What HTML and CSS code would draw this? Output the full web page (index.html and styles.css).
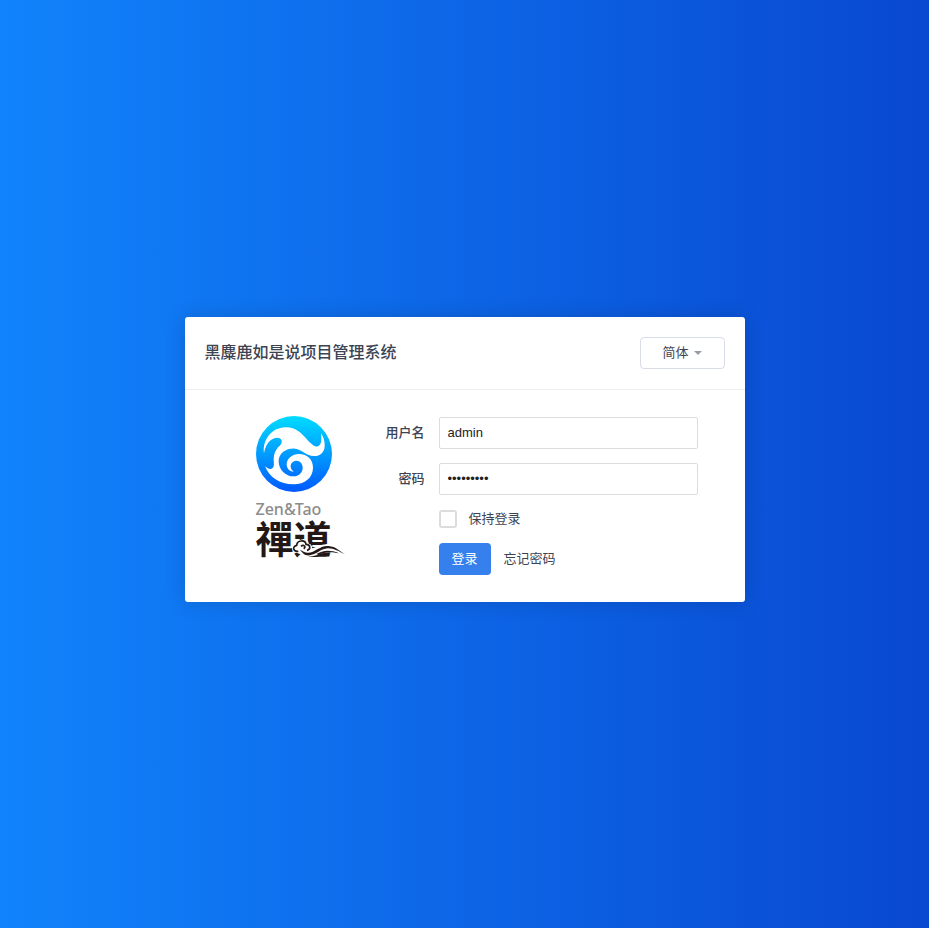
FILE: index.html
```html
<!DOCTYPE html>
<html lang="zh-CN">
<head>
<meta charset="utf-8">
<meta name="viewport" content="width=device-width, initial-scale=1">
<title>用户登录</title>
<link rel="stylesheet" href="styles.css">
</head>
<body>
<main class="login-panel">
  <header class="panel-head">
    <h1 class="title">黑麋鹿如是说项目管理系统</h1>
    <button type="button" class="lang-btn">简体<span class="caret"></span></button>
  </header>
  <div class="panel-body">
    <div class="brand">
      <svg class="brand-mark" viewBox="33 33 228 228" aria-hidden="true">
        <defs>
          <linearGradient id="sea" x1="0" y1="0" x2="0" y2="1">
            <stop offset="0" stop-color="#00dcff"/>
            <stop offset="0.5" stop-color="#009cff"/>
            <stop offset="1" stop-color="#0058ff"/>
          </linearGradient>
        </defs>
        <circle cx="147" cy="147" r="114" fill="url(#sea)"/>
        <path fill="#fff" d="M57 145C52 106 78 68 122 67C151 66 169 84 187 104C200 118 211 128 221 123C230 118 230 101 228 85C236 97 240 110 239 125C237 144 223 154 206 153C184 152 172 134 150 131C125 129 102 144 101 167C100 195 124 215 147 214C163 213 173 201 173 188C173 176 165 167 155 167C144 167 137 175 137 184C137 192 141 196 146 200C133 200 125 190 125 178C125 160 142 147 162 147C187 147 204 163 204 188C204 218 179 238 146 238C104 238 72 216 60 183C68 191 76 194 82 190C89 185 86 174 86 162C86 147 92 136 99 127C107 120 113 113 109 104C105 96 90 96 79 104C65 114 60 129 57 145Z"/>
      </svg>
      <div class="brand-latin">Zen&amp;Tao</div>
      <div class="brand-han">禪道
        <svg class="brand-cloud" viewBox="0 0 162 60" aria-hidden="true">
          <path d="M12 45C3 38 10 24 22 27C22 10 49 8 50 26C60 27 62 36 56 41C73 44 88 24 116 29C136 32 145 44 160 52C140 42 126 40 108 43C84 48 70 61 45 57C34 54 25 48 12 45Z" fill="#fff" stroke="#fff" stroke-width="8"/>
          <path d="M22 46C7 48 2 32 17 28C18 12 43 10 45 25C58 25 61 40 48 43M30 31C38 24 47 33 38 38" fill="none" stroke="#231815" stroke-width="5"/>
          <path d="M26 43C35 43 39 51 50 50C72 51 86 28 112 30C136 32 145 45 162 55C143 46 128 36 110 37C88 38 73 60 48 58C36 57 36 48 26 43Z" fill="#231815"/>
          <path d="M76 54C94 45 113 39 144 52C118 46 100 48 83 57Z" fill="#231815"/>
        </svg>
      </div>
    </div>
    <form class="login-form">
      <label class="field-label" for="account">用户名</label>
      <input class="field" id="account" type="text" value="admin">
      <label class="field-label" for="password">密码</label>
      <input class="field" id="password" type="password" value="123456789">
      <label class="keep"><input class="keep-box" type="checkbox">保持登录</label>
      <div class="actions">
        <button type="button" class="submit-btn">登录</button>
        <a class="forgot" href="#">忘记密码</a>
      </div>
    </form>
  </div>
</main>
</body>
</html>
```
FILE: styles.css
```css
* { box-sizing: border-box; }

body {
  margin: 0;
  min-height: 100vh;
  padding: 0 16px 10px;
  display: flex;
  align-items: center;
  justify-content: center;
  background: linear-gradient(90deg, #1183fb 0%, #0948d1 100%);
  color: #3c4353;
  font: 13px/18px "Liberation Sans", "Noto Sans CJK SC", sans-serif;
}

button, input { font: inherit; color: inherit; }

.login-panel {
  width: 100%;
  max-width: 560px;
  background: #fff;
  border-radius: 3px;
  box-shadow: 0 0 20px rgba(0, 0, 0, .15);
}

.panel-head {
  display: flex;
  align-items: center;
  justify-content: space-between;
  padding: 20px;
  border-bottom: 1px solid #eee;
}

.title { margin: 0; font-size: 16px; line-height: 24px; font-weight: 500; }

.lang-btn {
  display: flex;
  align-items: center;
  gap: 5px;
  height: 32px;
  padding: 0 22px 0 21px;
  border: 1px solid #d8dbe8;
  border-radius: 4px;
  background: #fff;
}

.caret {
  border: 4px solid transparent;
  border-top-color: #999ca5;
  border-bottom: 0;
}

.panel-body {
  display: grid;
  grid-template-columns: 90px 1fr;
  gap: 40px;
  padding: 26px 47px 27px 71px;
}

.brand-mark { display: block; width: 76px; height: 76px; }

.brand-latin {
  margin-top: 8px;
  color: #8c8c8c;
  font: 500 16px/18px "Noto Sans", sans-serif;
}

.brand-han {
  position: relative;
  color: #231815;
  font: 700 38px/38px "Noto Sans CJK TC", sans-serif;
  white-space: nowrap;
}

.brand-cloud {
  position: absolute;
  right: 1px;
  bottom: 0;
  width: 54px;
  height: 20px;
}

.login-form {
  display: grid;
  grid-template-columns: 39px 1fr;
  gap: 14px;
  align-content: start;
  align-items: center;
  padding-top: 1px;
}

.field-label { text-align: right; font-weight: 500; white-space: nowrap; }

.field {
  width: 100%;
  height: 32px;
  padding: 0 8px;
  border: 1px solid #dcdcdc;
  border-radius: 2px;
  background: #fff;
  color: #222;
}

.keep, .actions {
  grid-column: 2;
  display: flex;
  align-items: center;
}

.keep { gap: 12px; height: 20px; }

.keep-box {
  appearance: none;
  width: 18px;
  height: 18px;
  margin: 0;
  border: 2px solid #dcdcdc;
  border-radius: 3px;
  background: #fff;
}

.keep-box:checked { background: #3883fa; }

.actions { gap: 13px; }

.submit-btn {
  height: 32px;
  padding: 0 13px;
  border: 0;
  border-radius: 4px;
  background: #3680ee;
  color: #fff;
}

.forgot { color: inherit; text-decoration: none; }
```
